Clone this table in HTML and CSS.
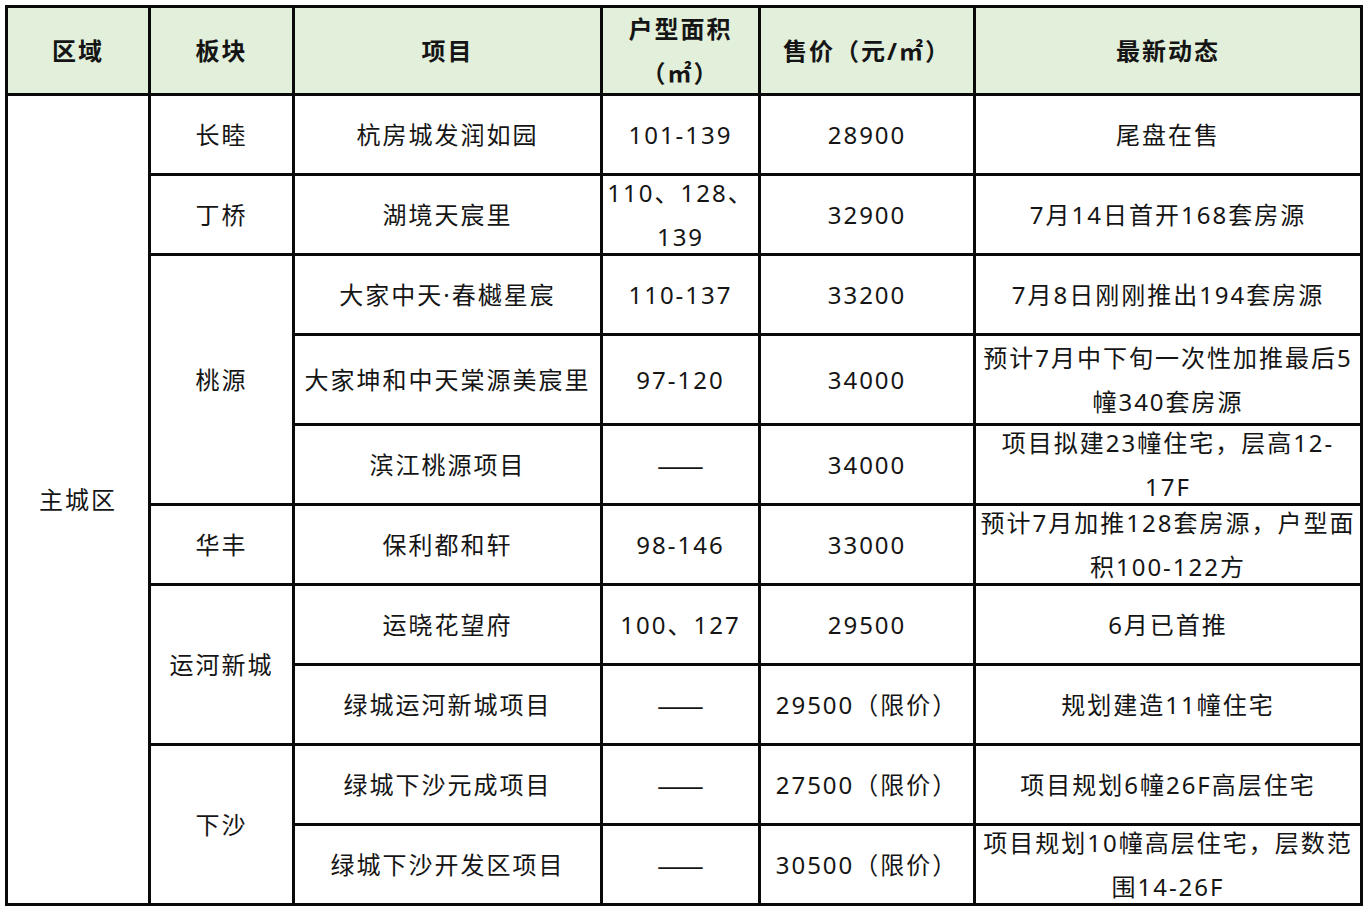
FILE: index.html
```html
<!DOCTYPE html>
<html lang="zh-CN">
<head>
<meta charset="utf-8">
<title>楼盘动态</title>
<link rel="stylesheet" href="styles.css">
</head>
<body>
<div class="sheet">
  <div class="cell head">区域</div>
  <div class="cell head">板块</div>
  <div class="cell head">项目</div>
  <div class="cell head">户型面积<br>（㎡）</div>
  <div class="cell head">售价（元/㎡）</div>
  <div class="cell head">最新动态</div>

  <div class="cell span-10">主城区</div>
  <div class="cell">长睦</div>
  <div class="cell">杭房城发润如园</div>
  <div class="cell">101-139</div>
  <div class="cell">28900</div>
  <div class="cell">尾盘在售</div>

  <div class="cell">丁桥</div>
  <div class="cell">湖境天宸里</div>
  <div class="cell">110、128、<br>139</div>
  <div class="cell">32900</div>
  <div class="cell">7月14日首开168套房源</div>

  <div class="cell span-3">桃源</div>
  <div class="cell">大家中天·春樾星宸</div>
  <div class="cell">110-137</div>
  <div class="cell">33200</div>
  <div class="cell">7月8日刚刚推出194套房源</div>

  <div class="cell">大家坤和中天棠源美宸里</div>
  <div class="cell">97-120</div>
  <div class="cell">34000</div>
  <div class="cell">预计7月中下旬一次性加推最后5<br>幢340套房源</div>

  <div class="cell">滨江桃源项目</div>
  <div class="cell"><span class="dash">——</span></div>
  <div class="cell">34000</div>
  <div class="cell">项目拟建23幢住宅，层高12-<br>17F</div>

  <div class="cell">华丰</div>
  <div class="cell">保利都和轩</div>
  <div class="cell">98-146</div>
  <div class="cell">33000</div>
  <div class="cell">预计7月加推128套房源，户型面<br>积100-122方</div>

  <div class="cell span-2">运河新城</div>
  <div class="cell">运晓花望府</div>
  <div class="cell">100、127</div>
  <div class="cell">29500</div>
  <div class="cell">6月已首推</div>

  <div class="cell">绿城运河新城项目</div>
  <div class="cell"><span class="dash">——</span></div>
  <div class="cell">29500（限价）</div>
  <div class="cell">规划建造11幢住宅</div>

  <div class="cell span-2">下沙</div>
  <div class="cell">绿城下沙元成项目</div>
  <div class="cell"><span class="dash">——</span></div>
  <div class="cell">27500（限价）</div>
  <div class="cell">项目规划6幢26F高层住宅</div>

  <div class="cell">绿城下沙开发区项目</div>
  <div class="cell"><span class="dash">——</span></div>
  <div class="cell">30500（限价）</div>
  <div class="cell">项目规划10幢高层住宅，层数范<br>围14-26F</div>
</div>
</body>
</html>
```

FILE: styles.css
```css
html, body {
  margin: 0;
  padding: 0;
  background: #ffffff;
}

body {
  font-family: "Noto Sans", "Noto Sans CJK SC", sans-serif;
  color: #151515;
}

.sheet {
  display: grid;
  grid-template-columns: 140px 141px 305px 155px 212px 384px;
  grid-template-rows: 85px 77px 77px 77px 87px 77px 77px 77px 77px 77px 77px;
  gap: 3px;
  padding: 3px;
  background: #0a0a0a;
  width: max-content;
  margin: 5px 0 0 5px;
}

.cell {
  display: flex;
  align-items: center;
  justify-content: center;
  text-align: center;
  background: #ffffff;
  overflow: hidden;
  padding: 0 2px;
  font-size: 24px;
  letter-spacing: 2px;
  line-height: 44px;
  white-space: nowrap;
}

.head {
  background: #e2efda;
  font-weight: 700;
}

.dash {
  font-family: "Noto Sans CJK SC", sans-serif;
  font-size: 28px;
  letter-spacing: 0;
  margin-top: -2px;
}

.span-10 {
  grid-row: span 10;
}

.span-3 {
  grid-row: span 3;
}

.span-2 {
  grid-row: span 2;
}
```
